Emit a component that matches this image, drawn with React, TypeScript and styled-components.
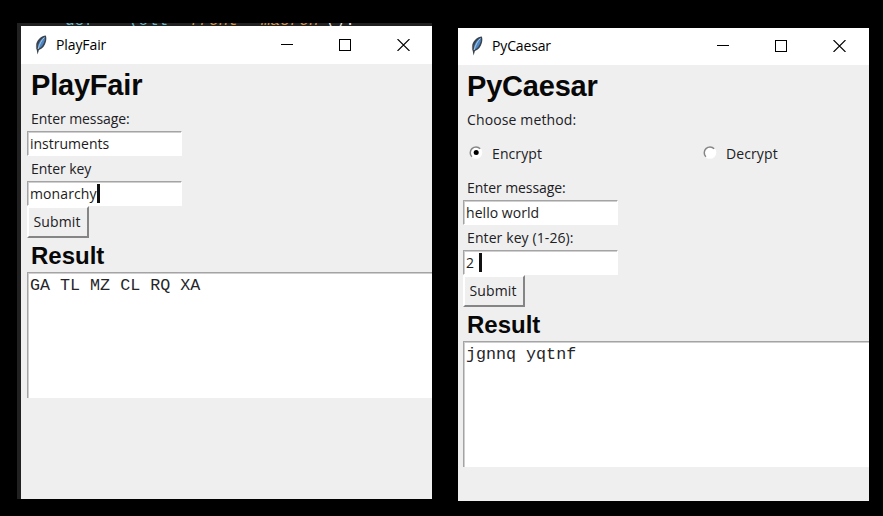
import React from 'react';
import styled, { createGlobalStyle } from 'styled-components';

const Global = createGlobalStyle`
  * { box-sizing: border-box; }
  body { margin: 0; background: #000; }
`;

const ui = `font-family: 'Open Sans', 'Noto Sans', sans-serif;`;

const Desktop = styled.main`
  width: 883px;
  height: 516px;
  overflow: hidden;
  background: #000;
  display: flex;
  align-items: flex-start;
  gap: 26px;
  padding: 23px 0 0 17px;
`;

const Backdrop = styled.div`
  width: 415px;
  height: 476px;
  background: #212121;
  padding-left: 4px;
`;

const CodeStrip = styled.div`
  height: 3px;
  overflow: hidden;
  display: flex;
  white-space: pre;
  padding-left: 44px;
  font: 16px/20px 'Liberation Mono', monospace;
`;

const Code = styled.span<{ $color: string; $width: number; $italic?: boolean }>`
  flex: none;
  width: ${p => p.$width}px;
  margin-top: -12px;
  color: ${p => p.$color};
  font-style: ${p => (p.$italic ? 'italic' : 'normal')};
`;

const Window = styled.section<{ $top?: number }>`
  width: 411px;
  height: 473px;
  margin-top: ${p => p.$top ?? 0}px;
  background: #efefef;
  overflow: hidden;
`;

const TitleBar = styled.header<{ $height: number; $left: number; $right: number; $bottom?: number }>`
  height: ${p => p.$height}px;
  background: #fff;
  display: flex;
  align-items: center;
  padding: 0 ${p => p.$right}px ${p => p.$bottom ?? 0}px ${p => p.$left}px;
`;

const Title = styled.span<{ $spacing: number }>`
  ${ui}
  flex: 1;
  padding-left: 7px;
  font-size: 14px;
  line-height: 20px;
  letter-spacing: ${p => p.$spacing}px;
  color: #000;
`;

const Controls = styled.div`
  display: flex;
  gap: 46px;
  svg { display: block; }
`;

const Body = styled.div<{ $left: number }>`
  display: flex;
  flex-direction: column;
  align-items: flex-start;
  padding-left: ${p => p.$left}px;
`;

const Heading = styled.h1<{ $spacing: number }>`
  margin: 0 0 0 4px;
  height: 42px;
  font: bold 29px/43px 'Liberation Sans', Arial, sans-serif;
  letter-spacing: ${p => p.$spacing}px;
  color: #080808;
`;

const Subheading = styled.h2`
  margin: 0 0 0 4px;
  height: 34px;
  font: bold 24px/36px 'Liberation Sans', Arial, sans-serif;
  letter-spacing: 0;
  color: #080808;
`;

const Label = styled.label<{ $spacing: number }>`
  ${ui}
  height: 25px;
  line-height: 25px;
  margin-left: 4px;
  font-size: 14px;
  letter-spacing: ${p => p.$spacing}px;
  color: #202024;
  white-space: pre;
`;

const Field = styled.div<{ $spacing: number }>`
  ${ui}
  width: 155px;
  height: 25px;
  display: flex;
  align-items: center;
  padding-left: 2px;
  background: #fff;
  border: 1px solid #fff;
  border-top-color: #a4a4a4;
  border-left-color: #a4a4a4;
  box-shadow: inset 1px 1px #cfcfcf;
  font-size: 14px;
  line-height: 20px;
  letter-spacing: ${p => p.$spacing}px;
  color: #1c1c20;
  white-space: pre;
`;

const Caret = styled.i<{ $gap?: number }>`
  width: 3px;
  height: 19px;
  margin-left: ${p => p.$gap ?? 0}px;
  background: #111;
`;

const Submit = styled.button`
  ${ui}
  width: 62px;
  height: 32px;
  padding: 0 2px 1px 0;
  background: #efefef;
  border: 2px solid;
  border-color: #fff #858585 #858585 #fff;
  font-size: 14px;
  line-height: 20px;
  letter-spacing: 0.15px;
  color: #202024;
`;

const Output = styled.div`
  width: 410px;
  height: 126px;
  padding: 3px 2px;
  background: #fff;
  border-top: 1px solid #a4a4a4;
  border-left: 1px solid #a4a4a4;
  box-shadow: inset 1px 1px #cfcfcf;
  font: 16.7px/20px 'Liberation Mono', 'Courier New', monospace;
  color: #26262a;
  white-space: pre;
`;

const RadioRow = styled.div`
  display: flex;
  height: 43px;
  padding: 0 0 0 6px;
  align-items: center;
`;

const RadioOption = styled.div<{ $width?: number }>`
  display: flex;
  align-items: center;
  width: ${p => (p.$width ? `${p.$width}px` : 'auto')};
  svg { margin-bottom: 2px; }
`;

const Feather = () => (
  <svg width="16" height="20" viewBox="0 0 16 20">
    <path d="M12.800.5C8.500.8 4.800 4 3.300 8.800c-.6 2.200-.5 4.200.4 5.900L4.600 19.500 5.900 15c3.600-1 6-4.200 7-8.200.5-2 .7-4.200-.1-6.300Z" fill="#39424d" />
    <path d="M11.900 1.700C8.800 3 6.300 6.200 5 10.500l-.2 3.600c3.700-1.400 6-4.800 7-8.800Z" fill="#4c86c4" />
    <path d="M11.400 2.600C8.600 5 6.800 8.500 5.100 14" fill="none" stroke="#a9c9e4" strokeWidth="1" />
    <path d="M3.700 9l-.3 4.500" fill="none" stroke="#777" strokeWidth=".9" />
  </svg>
);

const WindowControls = () => (
  <Controls>
    <svg width="12" height="12" shapeRendering="crispEdges"><path d="M0 5.500H12" stroke="#000" /></svg>
    <svg width="12" height="12" shapeRendering="crispEdges"><rect x=".5" y=".5" width="11" height="11" fill="none" stroke="#000" /></svg>
    <svg width="13" height="12"><path d="M.5 0l12 12M12.500 0L.5 12" stroke="#000" strokeWidth="1.100" /></svg>
  </Controls>
);

const Radio = ({ checked = false }: { checked?: boolean }) => (
  <svg width="14" height="15" viewBox="0 0 14 15">
    <circle cx="7" cy="7.500" r="6.300" fill="#fff" />
    <path d="M2.900 11.800A5.700 5.700 0 0 1 11.200 3.700" fill="none" stroke="#858585" strokeWidth="1.500" />
    {checked && <circle cx="7.200" cy="7.500" r="2.500" fill="#000" />}
  </svg>
);

const OptionText = styled.span`
  ${ui}
  margin-left: 9px;
  font-size: 14px;
  line-height: 20px;
  letter-spacing: 0.1px;
  color: #202024;
`;

export default function App() {
  return (
    <>
      <Global />
      <Desktop>
        <Backdrop>
          <CodeStrip>
            <Code $color="#62b7c5" $width={64}>def</Code>
            <Code $color="#62b7c5" $width={61}>(oll</Code>
            <Code $color="#d9903f" $width={71} $italic>front</Code>
            <Code $color="#d9903f" $width={65} $italic>macron</Code>
            <Code $color="#ddd" $width={20}>():</Code>
          </CodeStrip>
          <Window>
            <TitleBar $height={38} $left={12} $right={22}>
              <Feather />
              <Title $spacing={-0.1}>PlayFair</Title>
              <WindowControls />
            </TitleBar>
            <Body $left={6}>
              <Heading $spacing={-0.2}>PlayFair</Heading>
              <Label $spacing={-0.07}>Enter message:</Label>
              <Field $spacing={0}>instruments</Field>
              <Label $spacing={-0.07}>Enter key</Label>
              <Field $spacing={0.1}>monarchy<Caret /></Field>
              <Submit>Submit</Submit>
              <Subheading>Result</Subheading>
              <Output>GA TL MZ CL RQ XA</Output>
            </Body>
          </Window>
        </Backdrop>
        <Window $top={5}>
          <TitleBar $height={37} $left={11} $right={23} $bottom={2}>
            <Feather />
            <Title $spacing={-0.15}>PyCaesar</Title>
            <WindowControls />
          </TitleBar>
          <Body $left={5}>
            <Heading $spacing={-0.2}>PyCaesar</Heading>
            <Label $spacing={0.13}>Choose method:</Label>
            <RadioRow>
              <RadioOption $width={234}><Radio checked /><OptionText>Encrypt</OptionText></RadioOption>
              <RadioOption><Radio /><OptionText>Decrypt</OptionText></RadioOption>
            </RadioRow>
            <Label $spacing={-0.07}>Enter message:</Label>
            <Field $spacing={0.05}>hello world</Field>
            <Label $spacing={0.1}>Enter key (1-26):</Label>
            <Field $spacing={-0.1}>2<Caret $gap={5} /></Field>
            <Submit>Submit</Submit>
            <Subheading>Result</Subheading>
            <Output>jgnnq yqtnf</Output>
          </Body>
        </Window>
      </Desktop>
    </>
  );
}
